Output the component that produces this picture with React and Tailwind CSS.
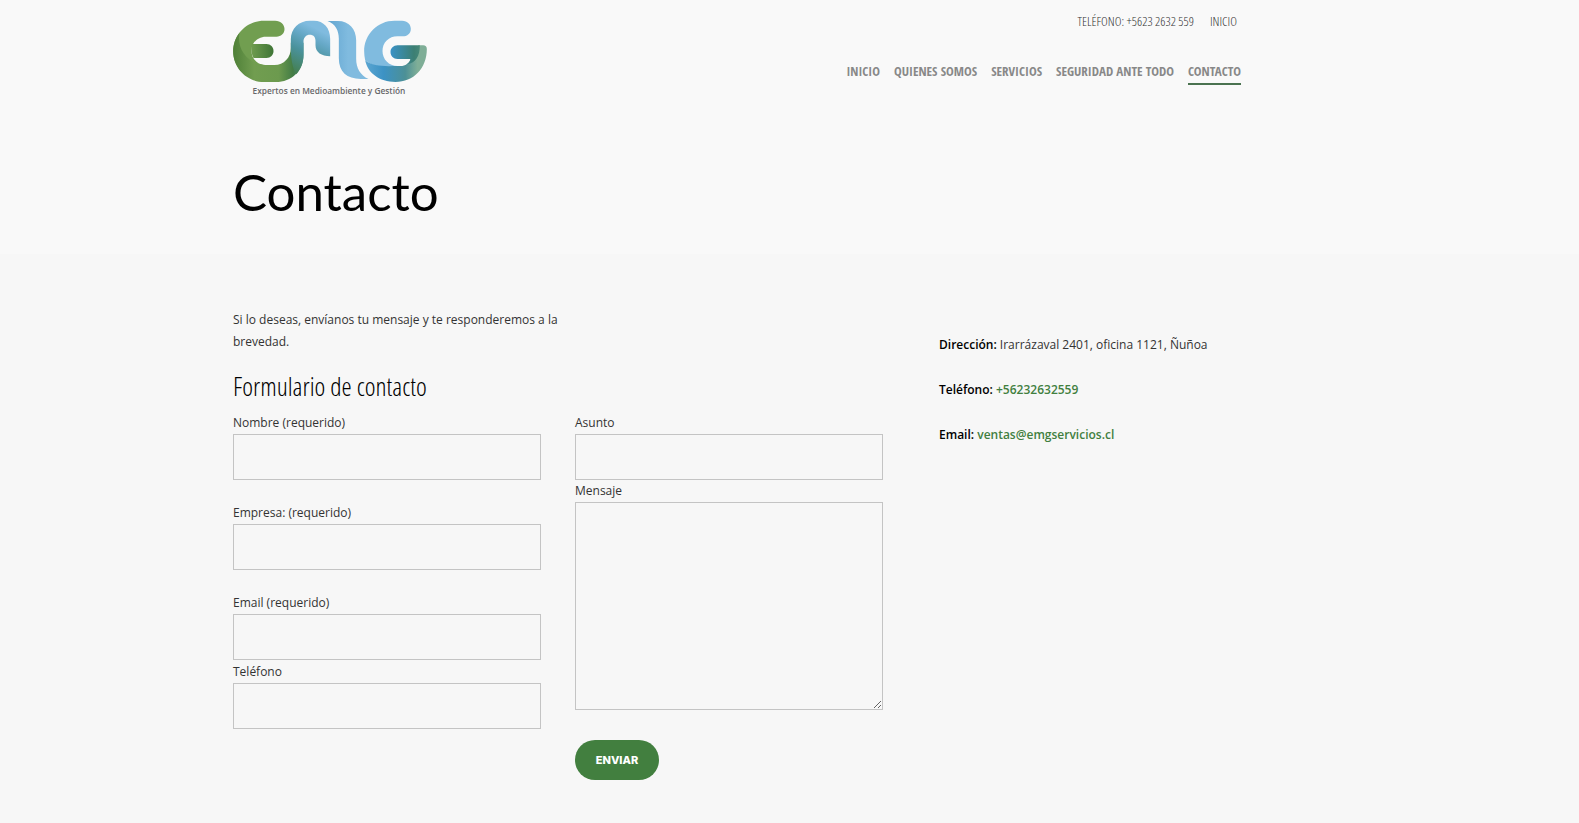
import React from 'react'

const navLinks = ['INICIO', 'QUIENES SOMOS', 'SERVICIOS', 'SEGURIDAD ANTE TODO', 'CONTACTO']

const Logo = () => {
  return (
    <svg viewBox="24 30 584 234" className="w-[195px] h-[78px] overflow-visible" role="img" aria-label="EMG">
      <defs>
        <linearGradient id="leaf" x1="0" y1="0" x2="1" y2="0">
          <stop offset="0" stopColor="#4f8038" />
          <stop offset="0.3" stopColor="#719d50" />
          <stop offset="0.65" stopColor="#6c9a4e" />
          <stop offset="0.85" stopColor="#437c45" />
          <stop offset="1" stopColor="#4a8f7a" />
        </linearGradient>
        <linearGradient id="bar" x1="0" y1="0" x2="1" y2="0">
          <stop offset="0" stopColor="#6f9c4f" />
          <stop offset="1" stopColor="#3f7536" />
        </linearGradient>
        <linearGradient id="river" gradientUnits="userSpaceOnUse" x1="190" y1="190" x2="262" y2="50">
          <stop offset="0" stopColor="#437c45" />
          <stop offset="0.5" stopColor="#4a929c" />
          <stop offset="0.8" stopColor="#67a9c8" />
          <stop offset="1" stopColor="#80bbdf" />
        </linearGradient>
        <linearGradient id="stream" x1="0" y1="0" x2="1" y2="0">
          <stop offset="0" stopColor="#62a5d0" />
          <stop offset="0.5" stopColor="#80bbdf" />
        </linearGradient>
        <linearGradient id="sea" x1="0" y1="0" x2="1" y2="0">
          <stop offset="0" stopColor="#5ba6d2" />
          <stop offset="0.3" stopColor="#3c92c4" />
          <stop offset="0.65" stopColor="#4c9096" />
          <stop offset="0.85" stopColor="#7fae97" />
        </linearGradient>
        <linearGradient id="gbar" x1="0" y1="0" x2="1" y2="0">
          <stop offset="0" stopColor="#3a92c6" />
          <stop offset="0.8" stopColor="#3c7f73" />
          <stop offset="1" stopColor="#478878" />
        </linearGradient>
      </defs>
      <path d="M24 124 C24 73 65 32 116 32 H150 C167 32 178 44 178 57 C178 71 167 80 154 80 H122 C97 80 79 99 79 122 C79 146 97 165 122 165 L118 210 C65 208 24 175 24 124Z" fill="#719e50" />
      <path d="M24 124 C24 103 31 83 43 69 C33 118 72 165 122 165 H148 C176 165 197 143 197 114 V98 L235 98 V134 C235 182 199 216 152 216 H116 C65 216 24 175 24 124Z" fill="url(#leaf)" />
      <path d="M80 102 H124 C136 102 145 111 145 123 C145 135 136 144 124 144 H85 C78 131 77 115 80 102Z" fill="url(#bar)" />
      <path d="M197 114 V88 C197 56 221 32 254 32 H266 C296 32 315 54 315 86 V139 C289 139 271 127 271 106 V92 C271 80 264 74 254 74 C243 74 235 82 235 95 V134 C235 158 227 178 213 193 C203 175 197 150 197 114Z" fill="url(#river)" />
      <path d="M307 33 H338 C372 33 393 57 393 91 V146 C393 174 405 195 430 207 H407 C365 207 341 186 341 145 V86 C341 60 330 42 307 33Z" fill="url(#stream)" />
      <path d="M417 124 C417 73 457 32 508 32 H531 C547 32 557 43 557 56 C557 70 547 79 532 79 H517 C491 79 472 98 472 123 C472 148 491 168 517 168 C475 176 443 170 420 151 C418 142 417 133 417 124Z" fill="#80bbdf" />
      <path d="M420 151 C443 170 477 169 517 168 H526 C541 168 552 160 556 147 L580 106 H594 C601 106 605 110 605 117 C605 175 565 216 511 216 C463 216 427 189 420 151Z" fill="url(#sea)" />
      <path d="M517 106 H584 C584 140 572 158 546 163 C551 159 555 154 556 147 H517 C505 147 496 138 496 126 C496 115 505 106 517 106Z" fill="url(#gbar)" />
      <text x="82" y="252" fontSize="25" fontWeight="600" fill="#68686a" className="font-['Open_Sans',sans-serif]">Expertos en Medioambiente y Gestión</text>
    </svg>
  )
}

const Field = ({ id, label, type = 'text' }) => {
  return (
    <div>
      <label htmlFor={id} className="block leading-[22px]">{label}</label>
      <input id={id} type={type} className="block w-full h-[46px] px-3 border border-[#c4c4c4] bg-transparent" />
    </div>
  )
}

const App = () => {
  return (
    <div className="min-h-screen bg-[#f7f7f7] text-[#333] text-[12px] font-['Open_Sans',sans-serif]">
      <div className="bg-[#f9f9f9] h-[254px]">
        <div className="max-w-[1113px] mx-auto">
          <header className="flex justify-between pt-5">
            <a href="#"><Logo /></a>
            <div className="flex flex-col items-end pr-[105px]">
              <div className="flex gap-4 -mt-2 pr-1 text-[13px] leading-[18px] text-[#333] font-['Open_Sans_Condensed_Light','Liberation_Sans_Narrow',sans-serif]">
                <span>TELÉFONO: +5623 2632 559</span>
                <a href="#">INICIO</a>
              </div>
              <nav className="flex gap-[14px] mt-[31px] text-[13px] leading-[20px] font-bold text-[#888] font-['Open_Sans_Condensed','Liberation_Sans_Narrow',sans-serif]">
                {navLinks.map((item) => (
                  <a
                    href="#"
                    key={item}
                    className={item === 'CONTACTO' ? 'pb-[2px] border-b-2 border-[#4a7350]' : 'pb-[2px]'}
                  >
                    {item}
                  </a>
                ))}
              </nav>
            </div>
          </header>
          <h1 className="mt-[60px] text-[51px] leading-[68px] text-black font-[Lato,sans-serif]">Contacto</h1>
        </div>
      </div>

      <main className="flex max-w-[1113px] mx-auto pt-[55px] gap-14">
        <div className="w-[650px]">
          <p className="w-[330px] leading-[22px]">Si lo deseas, envíanos tu mensaje y te responderemos a la brevedad.</p>
          <h2 className="mt-[14px] mb-[7px] text-[26px] leading-[38px] text-black font-light font-['Open_Sans_Condensed_Light','Open_Sans_Condensed','Liberation_Sans_Narrow',sans-serif]">Formulario de contacto</h2>
          <form className="grid grid-cols-2 gap-[34px]">
            <div className="flex flex-col gap-px">
              <div className="flex flex-col gap-[22px]">
                <Field id="nombre" label="Nombre (requerido)" />
                <Field id="empresa" label="Empresa: (requerido)" />
                <Field id="email" label="Email (requerido)" type="email" />
              </div>
              <Field id="telefono" label="Teléfono" type="tel" />
            </div>
            <div>
              <Field id="asunto" label="Asunto" />
              <label htmlFor="mensaje" className="block leading-[22px]">Mensaje</label>
              <textarea id="mensaje" className="block w-full h-[208px] p-3 border border-[#c4c4c4] bg-transparent resize" />
              <button type="submit" className="mt-[30px] w-[84px] h-10 rounded-full bg-[#427f3f] text-white text-[11px] font-extrabold font-[Inter,sans-serif]">ENVIAR</button>
            </div>
          </form>
        </div>
        <aside className="flex flex-col gap-[23px] pt-[25px] leading-[22px]">
          <p><strong className="font-semibold text-black">Dirección:</strong> Irarrázaval 2401, oficina 1121, Ñuñoa</p>
          <p><strong className="font-semibold text-black">Teléfono:</strong> <a href="#" className="font-semibold text-[#427f3f]">+56232632559</a></p>
          <p><strong className="font-semibold text-black">Email:</strong> <a href="#" className="font-semibold text-[#427f3f]">ventas@emgservicios.cl</a></p>
        </aside>
      </main>
    </div>
  )
}

export default App
